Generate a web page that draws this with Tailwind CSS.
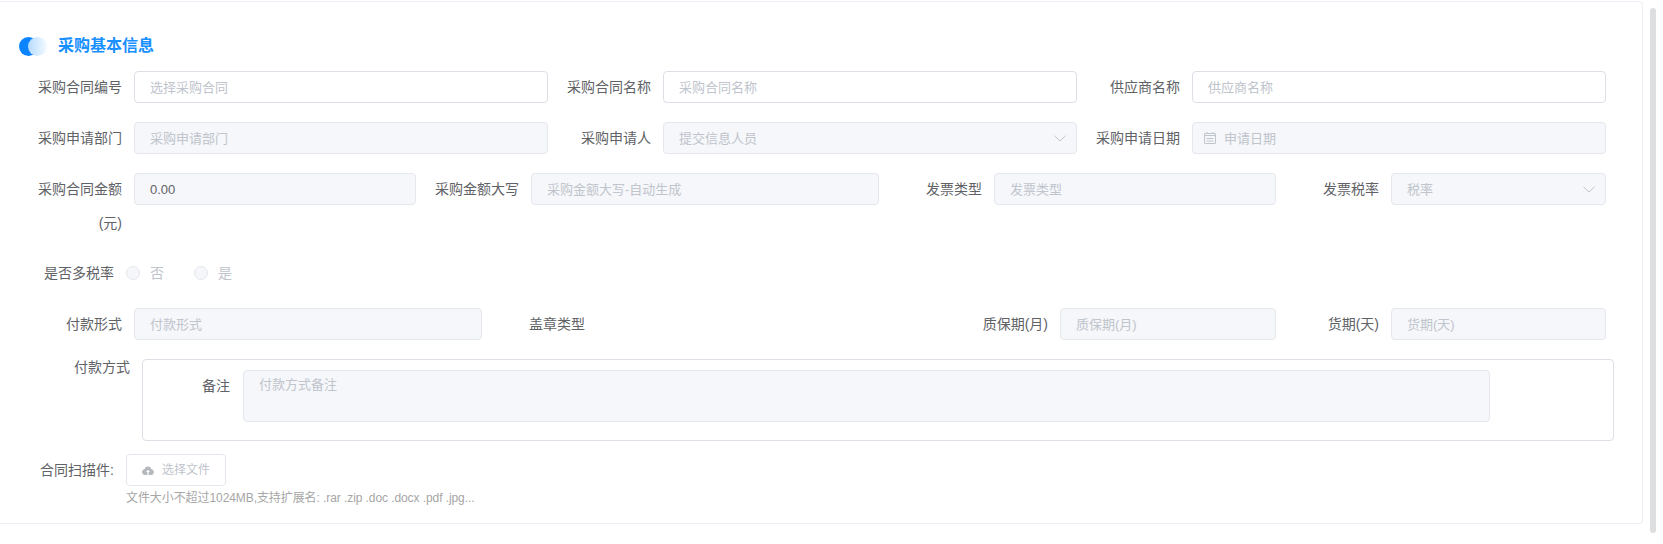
<!DOCTYPE html>
<html lang="zh-CN">
<head>
    <meta charset="UTF-8">
    <title>采购基本信息</title>
    <script src="https://cdn.jsdelivr.net/npm/@tailwindcss/browser@4"></script>
</head>
<body class="bg-white font-['Liberation_Sans','Noto_Sans_CJK_SC',sans-serif] text-sm text-[#606266] overflow-hidden">
    <div class="flex items-start w-[1663px] h-[544px]">
        <div class="w-[1643px] h-[523px] mt-px border border-l-0 border-[#ebeef5] rounded-r pt-[33px]">
            <!-- section title -->
            <div class="flex items-center h-[22px] pl-[19px] mb-[14px]">
                <div class="flex w-[28px] h-[19px]">
                    <div class="w-[19px] h-[19px] rounded-full bg-[#0a84ff] shrink-0"></div>
                    <div class="w-[19px] h-[19px] rounded-full bg-gradient-to-r from-[#b5dbff] to-[#f4faff] shrink-0 -ml-[10px]"></div>
                </div>
                <h2 class="ml-[11px] text-base font-semibold text-[#1890ff]">采购基本信息</h2>
            </div>

            <!-- row 1 -->
            <div class="grid grid-cols-[529px_529px_529px] pl-[20px] mb-[19px]">
                <div class="flex pr-px">
                    <label class="w-[102px] mr-[12px] text-right leading-[32px] whitespace-nowrap">采购合同编号</label>
                    <input class="flex-1 min-w-0 h-[32px] px-[15px] text-[13px] bg-white border border-[#dcdfe6] rounded placeholder:text-[#c0c4cc]" placeholder="选择采购合同">
                </div>
                <div class="flex pr-px">
                    <label class="w-[102px] mr-[12px] text-right leading-[32px] whitespace-nowrap">采购合同名称</label>
                    <input class="flex-1 min-w-0 h-[32px] px-[15px] text-[13px] bg-white border border-[#dcdfe6] rounded placeholder:text-[#c0c4cc]" placeholder="采购合同名称">
                </div>
                <div class="flex pr-px">
                    <label class="w-[102px] mr-[12px] text-right leading-[32px] whitespace-nowrap">供应商名称</label>
                    <input class="flex-1 min-w-0 h-[32px] px-[15px] text-[13px] bg-white border border-[#dcdfe6] rounded placeholder:text-[#c0c4cc]" placeholder="供应商名称">
                </div>
            </div>

            <!-- row 2 -->
            <div class="grid grid-cols-[529px_529px_529px] pl-[20px] mb-[19px]">
                <div class="flex pr-px">
                    <label class="w-[102px] mr-[12px] text-right leading-[32px] whitespace-nowrap">采购申请部门</label>
                    <input disabled class="flex-1 min-w-0 h-[32px] px-[15px] text-[13px] bg-[#f5f7fa] border border-[#e4e7ed] rounded placeholder:text-[#c0c4cc]" placeholder="采购申请部门">
                </div>
                <div class="flex pr-px">
                    <label class="w-[102px] mr-[12px] text-right leading-[32px] whitespace-nowrap">采购申请人</label>
                    <div class="relative flex-1 min-w-0">
                        <input disabled class="w-full h-[32px] px-[15px] text-[13px] bg-[#f5f7fa] border border-[#e4e7ed] rounded placeholder:text-[#c0c4cc]" placeholder="提交信息人员">
                        <svg class="absolute right-[11px] top-[13px] w-[12px] h-[7px]" viewBox="0 0 12 7" fill="none" stroke="#c0c4cc" stroke-width="1"><path d="M0.5 0.8 L6 6 L11.5 0.8"/></svg>
                    </div>
                </div>
                <div class="flex pr-px">
                    <label class="w-[102px] mr-[12px] text-right leading-[32px] whitespace-nowrap">采购申请日期</label>
                    <div class="relative flex-1 min-w-0">
                        <input disabled class="w-full h-[32px] pl-[31px] pr-[15px] text-[13px] bg-[#f5f7fa] border border-[#e4e7ed] rounded placeholder:text-[#c0c4cc]" placeholder="申请日期">
                        <svg class="absolute left-[12px] top-[10px] w-[12px] h-[12px]" viewBox="0 0 12 12" fill="none" stroke="#c0c4cc" stroke-width="1"><rect x="0.5" y="1.5" width="11" height="10" rx="0.5"/><path d="M0.5 3.5 H11.5 M3 0 V2 M9 0 V2 M2.5 6.5 H9.5 M2.5 9 H9.5"/></svg>
                    </div>
                </div>
            </div>

            <!-- row 3 -->
            <div class="grid grid-cols-[397px_463px_397px_330px] pl-[20px] mb-[17px]">
                <div class="flex pr-px">
                    <label class="w-[102px] mr-[12px] -mt-px text-right leading-[34px]">采购合同金额(元)</label>
                    <input disabled value="0.00" class="flex-1 min-w-0 h-[32px] px-[15px] text-[13px] bg-[#f5f7fa] border border-[#e4e7ed] rounded text-[#606266]">
                </div>
                <div class="flex pr-px">
                    <label class="w-[102px] mr-[12px] text-right leading-[32px] whitespace-nowrap">采购金额大写</label>
                    <input disabled class="flex-1 min-w-0 h-[32px] px-[15px] text-[13px] bg-[#f5f7fa] border border-[#e4e7ed] rounded placeholder:text-[#c0c4cc]" placeholder="采购金额大写-自动生成">
                </div>
                <div class="flex pr-px">
                    <label class="w-[102px] mr-[12px] text-right leading-[32px] whitespace-nowrap">发票类型</label>
                    <input disabled class="flex-1 min-w-0 h-[32px] px-[15px] text-[13px] bg-[#f5f7fa] border border-[#e4e7ed] rounded placeholder:text-[#c0c4cc]" placeholder="发票类型">
                </div>
                <div class="flex pr-px">
                    <label class="w-[102px] mr-[12px] text-right leading-[32px] whitespace-nowrap">发票税率</label>
                    <div class="relative flex-1 min-w-0">
                        <input disabled class="w-full h-[32px] px-[15px] text-[13px] bg-[#f5f7fa] border border-[#e4e7ed] rounded placeholder:text-[#c0c4cc]" placeholder="税率">
                        <svg class="absolute right-[11px] top-[13px] w-[12px] h-[7px]" viewBox="0 0 12 7" fill="none" stroke="#c0c4cc" stroke-width="1"><path d="M0.5 0.8 L6 6 L11.5 0.8"/></svg>
                    </div>
                </div>
            </div>

            <!-- multi tax radios -->
            <div class="flex items-center h-[32px] pl-[20px] mb-[19px]">
                <label class="w-[94px] mr-[12px] text-right whitespace-nowrap">是否多税率</label>
                <span class="w-[14px] h-[14px] rounded-full bg-[#f5f7fa] border border-[#e4e7ed]"></span>
                <span class="ml-[10px] text-[#c0c4cc]">否</span>
                <span class="ml-[30px] w-[14px] h-[14px] rounded-full bg-[#f5f7fa] border border-[#e4e7ed]"></span>
                <span class="ml-[10px] text-[#c0c4cc]">是</span>
            </div>

            <!-- row 4 -->
            <div class="grid grid-cols-[463px_463px_331px_330px] pl-[20px] mb-[19px]">
                <div class="flex pr-px">
                    <label class="w-[102px] mr-[12px] text-right leading-[32px] whitespace-nowrap">付款形式</label>
                    <input disabled class="flex-1 min-w-0 h-[32px] px-[15px] text-[13px] bg-[#f5f7fa] border border-[#e4e7ed] rounded placeholder:text-[#c0c4cc]" placeholder="付款形式">
                </div>
                <div class="flex pr-px">
                    <label class="w-[102px] mr-[12px] text-right leading-[32px] whitespace-nowrap">盖章类型</label>
                </div>
                <div class="flex pr-px">
                    <label class="w-[102px] mr-[12px] text-right leading-[32px] whitespace-nowrap">质保期(月)</label>
                    <input disabled class="flex-1 min-w-0 h-[32px] px-[15px] text-[13px] bg-[#f5f7fa] border border-[#e4e7ed] rounded placeholder:text-[#c0c4cc]" placeholder="质保期(月)">
                </div>
                <div class="flex pr-px">
                    <label class="w-[102px] mr-[12px] text-right leading-[32px] whitespace-nowrap">货期(天)</label>
                    <input disabled class="flex-1 min-w-0 h-[32px] px-[15px] text-[13px] bg-[#f5f7fa] border border-[#e4e7ed] rounded placeholder:text-[#c0c4cc]" placeholder="货期(天)">
                </div>
            </div>

            <!-- payment method box -->
            <div class="flex pl-[20px] mb-[13px]">
                <label class="w-[110px] mr-[12px] text-right leading-[16px]">付款方式</label>
                <div class="flex w-[1472px] h-[82px] pt-[10px] border border-[#dcdfe6] rounded">
                    <label class="w-[87px] mr-[13px] text-right leading-[32px]">备注</label>
                    <textarea disabled class="w-[1247px] h-[52px] px-[15px] py-[5px] text-[13px] bg-[#f5f7fa] border border-[#e4e7ed] rounded resize-none placeholder:text-[#c0c4cc]" placeholder="付款方式备注"></textarea>
                </div>
            </div>

            <!-- upload -->
            <div class="flex pl-[20px]">
                <label class="w-[94px] mr-[12px] text-right leading-[32px] whitespace-nowrap">合同扫描件:</label>
                <div>
                    <button class="flex items-center w-[100px] h-[32px] pl-[15px] border border-[#e4e7ed] rounded bg-white text-xs text-[#c0c4cc]">
                        <svg class="w-[12px] h-[9px] mr-[8px]" viewBox="0 0 12 9"><path fill="#b4b7bd" d="M3 9 A3 3 0 0 1 2.6 3.05 A3.5 3.5 0 0 1 9.3 3.05 A3 3 0 0 1 9 9 H6.6 V6 H8 L6 3.8 L4 6 H5.4 V9 Z"/></svg>
                        选择文件
                    </button>
                    <p class="mt-[4px] text-xs leading-[16px] tracking-[-0.08px] text-[#a6a6a6] whitespace-nowrap">文件大小不超过1024MB,支持扩展名: .rar .zip .doc .docx .pdf .jpg...</p>
                </div>
            </div>
        </div>

        <!-- scrollbar -->
        <div class="w-[6px] h-[525px] mt-2 ml-[7px] rounded bg-[#dddee0]"></div>
    </div>
</body>
</html>
